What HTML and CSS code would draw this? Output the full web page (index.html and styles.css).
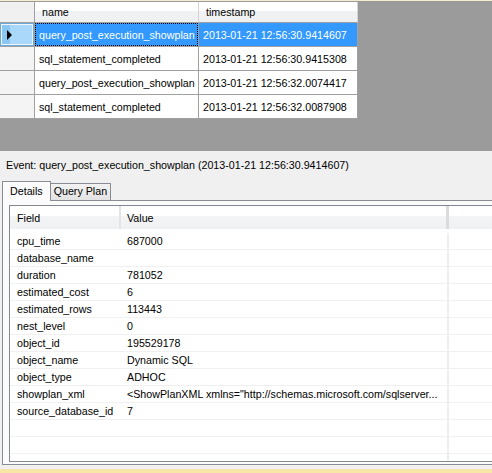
FILE: index.html
```html
<!DOCTYPE html>
<html>
<head>
<meta charset="utf-8">
<link rel="stylesheet" href="styles.css">
</head>
<body>
<div class="topline"></div>
<div class="upper">
  <div class="grid">
    <div class="corner"></div>
    <div class="hcell">name</div>
    <div class="hcell">timestamp</div>

    <div class="rh rh-sel"><span class="arrow"></span></div>
    <div class="cell cell-sel"><span class="focus">query_post_execution_showplan</span></div>
    <div class="cell cell-sel">2013-01-21 12:56:30.9414607</div>

    <div class="rh"></div>
    <div class="cell">sql_statement_completed</div>
    <div class="cell">2013-01-21 12:56:30.9415308</div>

    <div class="rh"></div>
    <div class="cell">query_post_execution_showplan</div>
    <div class="cell">2013-01-21 12:56:32.0074417</div>

    <div class="rh"></div>
    <div class="cell">sql_statement_completed</div>
    <div class="cell">2013-01-21 12:56:32.0087908</div>
  </div>
</div>
<div class="lower">
  <div class="event">Event: query_post_execution_showplan (2013-01-21 12:56:30.9414607)</div>
  <div class="tabs">
    <div class="tab tab-active">Details</div>
    <div class="tab">Query Plan</div>
  </div>
  <div class="page">
    <div class="list">
      <div class="lhead">
        <div class="lh lh-field">Field</div>
        <div class="lh lh-value">Value</div>
        <div class="lh lh-extra"></div>
      </div>
      <div class="lbody">
        <div class="lrow"><div class="lf">cpu_time</div><div class="lv">687000</div><div class="lx"></div></div>
        <div class="lrow"><div class="lf">database_name</div><div class="lv"></div><div class="lx"></div></div>
        <div class="lrow"><div class="lf">duration</div><div class="lv">781052</div><div class="lx"></div></div>
        <div class="lrow"><div class="lf">estimated_cost</div><div class="lv">6</div><div class="lx"></div></div>
        <div class="lrow"><div class="lf">estimated_rows</div><div class="lv">113443</div><div class="lx"></div></div>
        <div class="lrow"><div class="lf">nest_level</div><div class="lv">0</div><div class="lx"></div></div>
        <div class="lrow"><div class="lf">object_id</div><div class="lv">195529178</div><div class="lx"></div></div>
        <div class="lrow"><div class="lf">object_name</div><div class="lv">Dynamic SQL</div><div class="lx"></div></div>
        <div class="lrow"><div class="lf">object_type</div><div class="lv">ADHOC</div><div class="lx"></div></div>
        <div class="lrow"><div class="lf">showplan_xml</div><div class="lv">&lt;ShowPlanXML xmlns="http://schemas.microsoft.com/sqlserver...</div><div class="lx"></div></div>
        <div class="lrow"><div class="lf">source_database_id</div><div class="lv">7</div><div class="lx"></div></div>
        <div class="lrow"><div class="lf"></div><div class="lv"></div><div class="lx"></div></div>
        <div class="lrow"><div class="lf"></div><div class="lv"></div><div class="lx"></div></div>
        <div class="lrow"><div class="lf"></div><div class="lv"></div><div class="lx"></div></div>
      </div>
    </div>
  </div>
</div>
<div class="bottomband"></div>
</body>
</html>
```
FILE: styles.css
```css
* { box-sizing: border-box; }
html, body {
  margin: 0;
  padding: 0;
}
body {
  width: 492px;
  height: 473px;
  overflow: hidden;
  font-family: "Liberation Sans", Arial, sans-serif;
  font-size: 10.7px;
  color: #000;
  background: #f0f0f0;
}
.topline {
  height: 1px;
  background: #f3edd2;
}
.upper {
  height: 150px;
  background: #9b9b9b;
  padding-top: 1px;
}
.grid {
  display: grid;
  width: 358px;
  grid-template-columns: 35px 164px 159px;
  grid-template-rows: 21px repeat(4, 24px);
  background: #fff;
}
.corner {
  background: #f0f0f0;
  border-right: 1px solid #a0a0a0;
  border-bottom: 1px solid #a0a0a0;
}
.hcell {
  background: linear-gradient(#ffffff 0%, #ffffff 45%, #f1f2f4 46%, #eef0f2 100%);
  border-right: 1px solid #d5d5d5;
  border-bottom: 1px solid #a0a0a0;
  padding-left: 7px;
  display: flex;
  align-items: center;
}
.rh {
  background: #f4f4f4;
  border-right: 1px solid #a0a0a0;
  border-bottom: 1px solid #a0a0a0;
  display: flex;
  align-items: center;
}
.rh-sel {
  background: linear-gradient(90deg, #8cc7f4 0%, #8cc7f4 30%, #a9d8fb 31%, #a9d8fb 100%);
  box-shadow: inset 0 0 0 1px #6aa9dc, inset 0 0 0 2px #f4f4f4;
  padding-left: 7px;
}
.arrow {
  width: 0;
  height: 0;
  border-left: 5px solid #000;
  border-top: 5px solid transparent;
  border-bottom: 5px solid transparent;
}
.cell {
  border-right: 1px solid #a0a0a0;
  border-bottom: 1px solid #a0a0a0;
  padding-left: 4px;
  display: flex;
  align-items: center;
  white-space: nowrap;
  overflow: hidden;
}
.cell-sel {
  background: #3399ff;
  color: #fff;
}
.cell-sel:has(.focus) {
  padding: 0;
}
.focus {
  flex: 1;
  align-self: stretch;
  display: flex;
  align-items: center;
  padding-left: 3px;
  border: 1px dotted #000;
}
.lower {
  height: 318px;
  background: #f0f0f0;
  padding-top: 7px;
}
.event {
  height: 13px;
  line-height: 13px;
  padding-left: 6px;
  margin-top: 1px;
  white-space: nowrap;
}
.tabs {
  margin-top: 8px;
  height: 20px;
  display: flex;
  align-items: flex-end;
  padding-left: 2px;
}
.tab {
  height: 17px;
  padding: 0 3px 0 3px;
  line-height: 15px;
  border: 1px solid #898c95;
  border-bottom: none;
  border-left: none;
  background: linear-gradient(#f2f2f2, #e3e3e3);
  white-space: nowrap;
}
.tab-active {
  height: 20px;
  padding: 0 7px 0 7px;
  line-height: 19px;
  border-left: 1px solid #898c95;
  background: #fbfbfb;
  margin-bottom: -1px;
  position: relative;
  z-index: 1;
}
.page {
  margin-left: 2px;
  height: 265px;
  border: 1px solid #898c95;
  border-right: none;
  background: #fbfbfb;
  padding: 4px 0 2px 6px;
}
.list {
  height: 257px;
  border: 1px solid #828790;
  border-right: none;
  background: #fff;
  overflow: hidden;
}
.lhead {
  height: 23px;
  display: flex;
  background: linear-gradient(#ffffff 0%, #ffffff 44%, #f3f4f6 45%, #f0f1f3 100%);
}
.lh {
  display: flex;
  align-items: center;
  border-right: 2px solid #e2e3e5;
  white-space: nowrap;
}
.lh-field { width: 111px; padding-left: 7px; }
.lh-value { width: 328px; padding-left: 6px; border-right: 3px solid #dadbdd; }
.lh-extra { flex: 1; border-right: none; }
.lbody {
  padding-top: 4px;
}
.lrow {
  height: 17px;
  display: flex;
  border-bottom: 1px solid #f0f0f0;
}
.lf, .lv {
  display: flex;
  align-items: center;
  white-space: nowrap;
  overflow: hidden;
}
.lf { width: 111px; padding-left: 7px; }
.lv { width: 328px; padding-left: 6px; border-right: 2px solid #eeeeee; }
.lx { flex: 1; }
.bottomband {
  height: 4px;
  background: #f8e6a6;
}
```
